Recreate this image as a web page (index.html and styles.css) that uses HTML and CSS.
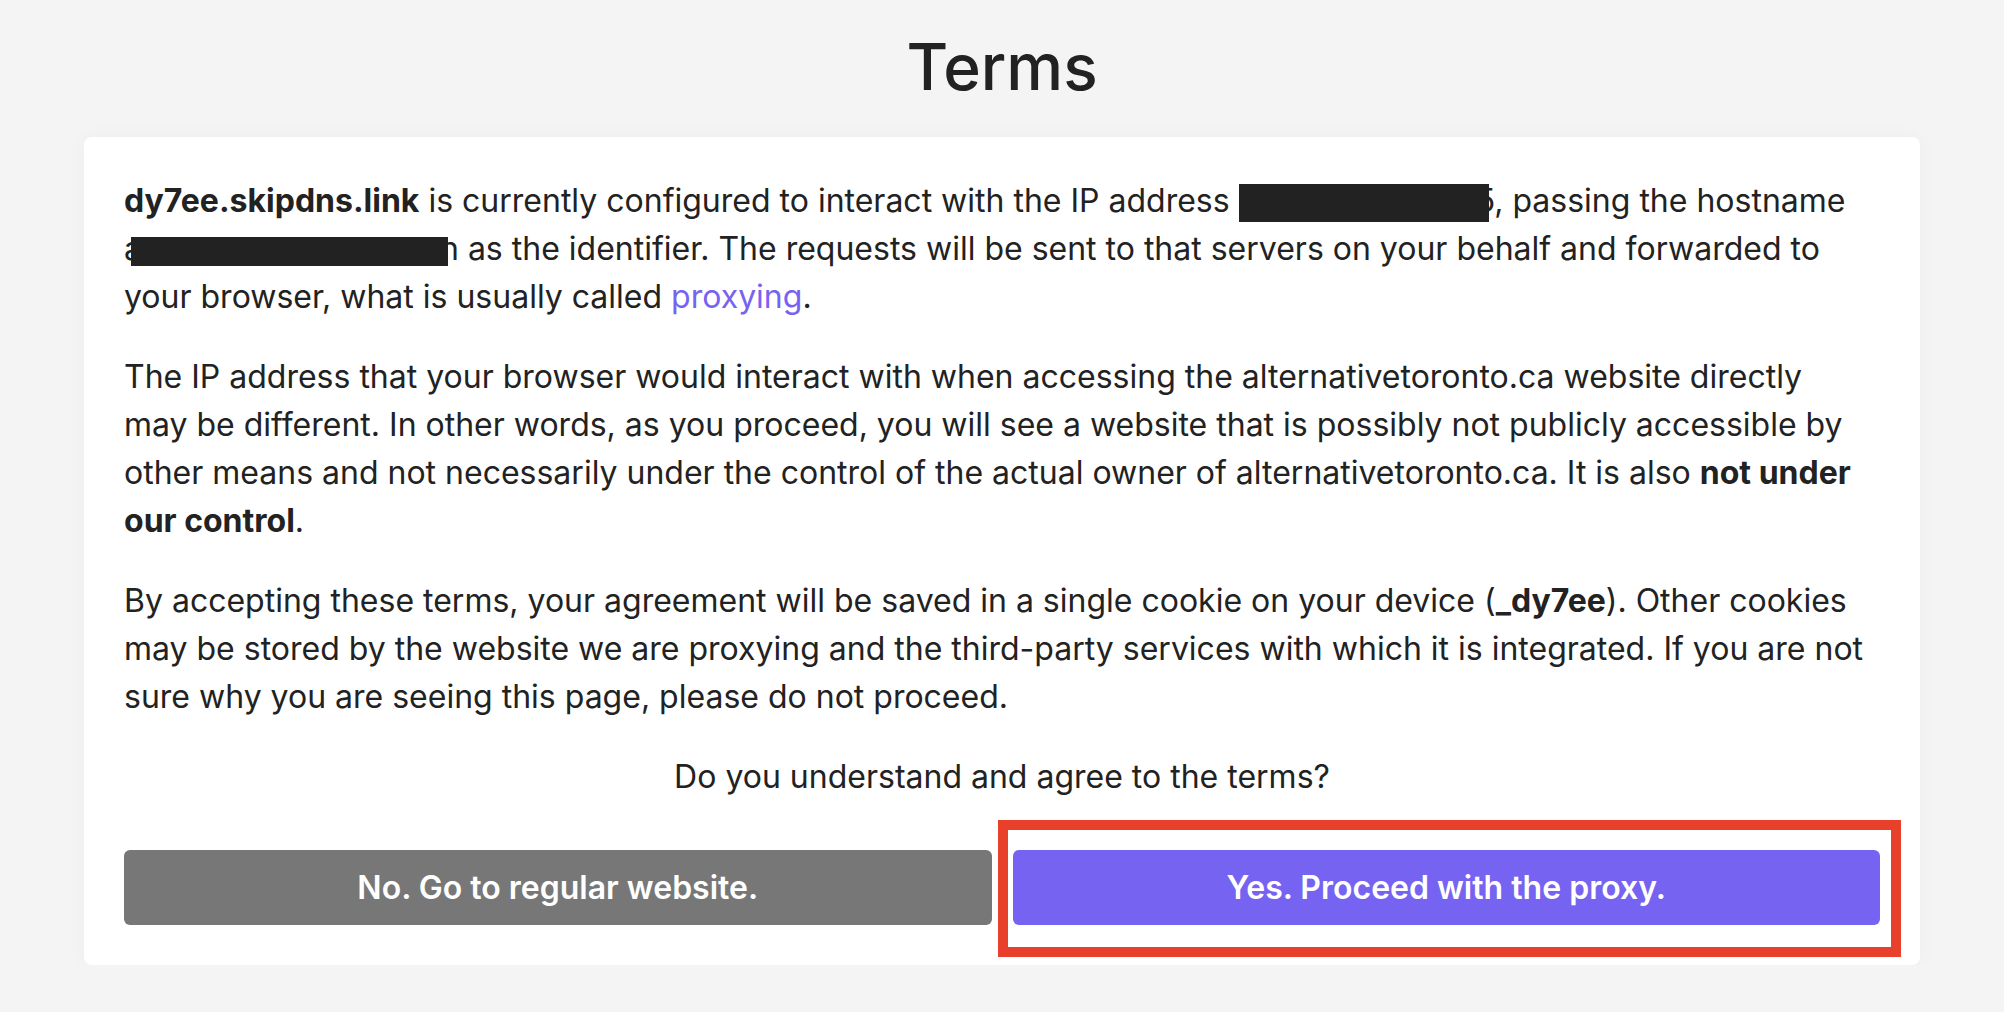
FILE: index.html
```html
<!DOCTYPE html>
<html lang="en">
<head>
  <meta charset="UTF-8" />
  <meta name="viewport" content="width=device-width, initial-scale=1.0"/>
  <title>Terms</title>
  <link rel="stylesheet" href="styles.css">
</head>
<body>
  <h1>Terms</h1>

  <div class="card">
    <p><strong>dy7ee.skipdns.link</strong> is currently configured to interact with the IP address <span class="nowrap"><span class="redact ip"></span>5</span>, passing the hostname <span class="nowrap">a<span class="redact host"></span>n</span> as the identifier. The requests will be sent to that servers on your behalf and forwarded to your browser, what is usually called <a href="#">proxying</a>.</p>

    <p>The IP address that your browser would interact with when accessing the alternativetoronto.ca website directly <span class="nowrap">may be</span> different. In other words, as you proceed, you will see a website that is possibly not publicly accessible by other means and not necessarily under the control of the actual owner of alternativetoronto.ca. It is also <strong>not under our control</strong>.</p>

    <p>By accepting these terms, your agreement will be saved in a single cookie on your device (<strong>_dy7ee</strong>). Other cookies may be stored by the website we are proxying and the third-party services with which it is integrated. If you are not sure why you are seeing this page, please do not proceed.</p>

    <p class="question">Do you understand and agree to the terms?</p>

    <div class="actions">
      <button class="btn btn-no">No. Go to regular website.</button>
      <div class="yes-wrap">
        <button class="btn btn-yes">Yes. Proceed with the proxy.</button>
        <!-- highlight box from the screenshot -->
        <div class="highlight"></div>
      </div>
    </div>
  </div>
</body>
</html>
```

FILE: styles.css
```css
body {
  margin: 0;
  background: #f4f4f4;
  font-family: Inter, "Noto Sans", sans-serif;
  color: #222;
}

h1 {
  text-align: center;
  font-size: 64px;
  font-weight: 500;
  margin: 28px 0 32px;
  line-height: normal;
}

.card {
  margin: 0 84px;
  background: white;
  padding: 40px;
  border-radius: 8px;
  box-shadow: 0px 0px 20px rgba(0,0,0,0.03);
}

p {
  font-size: 32px;
  line-height: 48px;
  margin: 0 0 32px;
}

strong {
  font-weight: 700;
}

a {
  color: #7763f1;
  text-decoration: none;
}

.nowrap {
  white-space: nowrap;
}

.redact {
  display: inline-block;
  background: #222;
  vertical-align: middle;
  position: relative;
  z-index: 1;
}

.redact.ip {
  width: 250px;
  height: 38px;
  margin-right: -13px;
}

.redact.host {
  width: 317px;
  height: 29px;
  margin-left: -11px;
  margin-right: -8px;
}

.question {
  text-align: center;
  margin-bottom: 49px;
}

.actions {
  display: grid;
  grid-template-columns: 1fr 1fr;
  gap: 21px;
}

.btn {
  height: 75px;
  padding: 0;
  border: none;
  border-radius: 6px;
  color: white;
  font-family: Inter, "Noto Sans", sans-serif;
  font-size: 32px;
  font-weight: 600;
  cursor: pointer;
}

.btn-no {
  background: #777777;
}

.yes-wrap {
  display: flex;
  position: relative;
}

.btn-yes {
  flex: 1;
  background: #7763f1;
}

.highlight {
  position: absolute;
  left: -15px;
  right: -21px;
  top: -30px;
  bottom: -32px;
  border: 10px solid #e8402a;
}
```
